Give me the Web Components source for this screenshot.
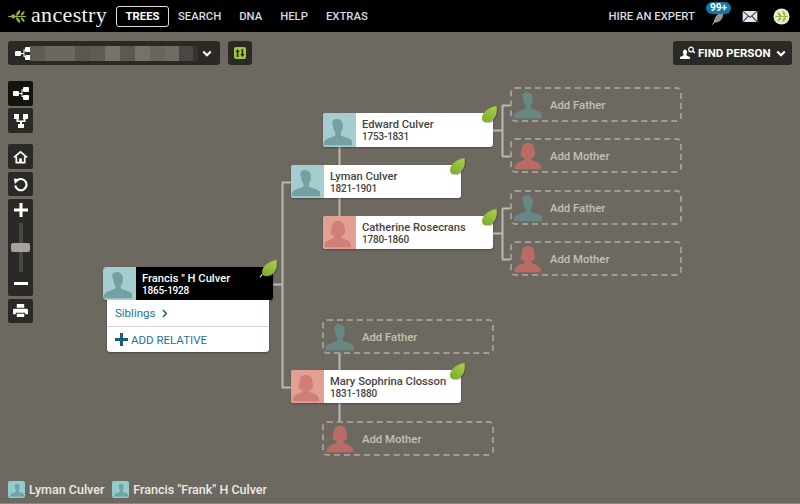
<!DOCTYPE html>
<html>
<head>
<meta charset="utf-8">
<title>Ancestry tree</title>
<style>
  html, body { margin: 0; height: 100%; }
  body { background: #6d6860; font-family: Roboto, "Liberation Sans", sans-serif; overflow: hidden; }
</style>
</head>
<body>
<tree-app></tree-app>

<script>
const MALE = 'M12 3.500c3.400 0 5.200 2.600 5.200 6 0 1.600-.3 2.700-.8 3.900-.4 1-.9 1.800-1.100 2.700-.2 1 .3 1.700 1.500 2.200l5.400 1.900c2 .7 3.200 2 3.800 4.300v1.500H.5v-1.500c.6-2.300 1.800-3.600 3.800-4.300l5-1.900c1.200-.5 1.700-1.200 1.500-2.200-.2-.9-.8-1.700-1.200-2.700-.5-1.200-.8-2.300-.8-3.900C6.800 6.100 8.600 3.500 12 3.500z';
const FEMALE = 'M12.500 3.500c3.300 0 6 1.700 6 5 0 2 .6 3 .6 4.600 0 1.600-1.300 2.700-3 3-.5.900-.3 1.800.8 2.400l3.700 1.500c2.200.9 3.300 2.200 3.600 4.300v1.700H1.500v-1.700c.3-2.100 1.400-3.400 3.600-4.300l3.700-1.500c1.100-.6 1.300-1.500.8-2.400-1.800-.3-3.100-1.300-3.100-2.800 0-1.400.9-2.300 1-4.300.2-3.500 2-5.500 5-5.500z';

function silhouette(kind, color, size) {
  const d = kind === 'f' ? FEMALE : MALE;
  return `<svg viewBox="0 0 25 28" width="${size}" height="${size * 28 / 25}" style="display:block;flex:none"><path fill="${color}" d="${d}"/></svg>`;
}

const LEAF = `<svg viewBox="0 0 20 20" width="19" height="19" style="display:block">
  <defs><linearGradient id="lg" x1="0.800" y1="0" x2="0.200" y2="1"><stop offset="0" stop-color="#a5cf48"/><stop offset="1" stop-color="#7fab2e"/></linearGradient></defs>
  <path d="M18.500 1C20 10 16 18 8 18c-2 0-3.500-.5-4.500-2C1.500 10 8 2.500 18.500 1z" fill="#2f2d28" opacity=".4" transform="translate(1 .8)"/>
  <path d="M18.500 1C20 10 16 18 8 18c-2 0-3.500-.5-4.500-2C1.500 10 8 2.500 18.500 1z" fill="url(#lg)"/>
  <path d="M.8 19.200 3.500 16.200" stroke="#e4ebd2" stroke-width="1.100" fill="none"/>
</svg>`;

const TREE_ICON = `<svg viewBox="0 0 16 13" width="16" height="13" style="display:block;flex:none" fill="#fff">
  <rect x="0" y="4" width="6" height="5" rx="1"/><rect x="10" y="0" width="6" height="5" rx="1"/><rect x="10" y="8" width="6" height="5" rx="1"/>
  <path d="M5 6h3.500V2.500H11v1H9.500v5.500H11v1H8.500V7H5z"/>
</svg>`;

const CHEVRON = `<svg viewBox="0 0 12 8" width="10" height="7" style="display:block;flex:none"><path d="M1.500 1.500 6 6l4.500-4.500" fill="none" stroke="#fff" stroke-width="2.600"/></svg>`;

class NavBar extends HTMLElement {
  connectedCallback() {
    this.attachShadow({ mode: 'open' }).innerHTML = `
      <style>
        :host { display: flex; align-items: center; height: 32px; background: #000; padding: 0 0 0 8px; box-sizing: border-box; }
        .logo { display: flex; align-items: center; width: 108px; flex: none; }
        .logo span { font: 22px/24px "Liberation Serif", serif; color: #f2f2ee; margin-left: 2px; letter-spacing: .35px; position: relative; top: -1px; }
        a { font-size: 11.300px; font-weight: 500; color: #d5dbe0; white-space: nowrap; }
        .links { display: flex; align-items: center; gap: 18px; }
        .links a.on { color: #fff; font-weight: 700; border: 1px solid #dcdcdc; border-radius: 3px; height: 21px; line-height: 20px; width: 53px; box-sizing: border-box; text-align: center; margin-right: -9px; }
        .right { margin-left: auto; display: flex; align-items: center; padding-right: 10px; }
        .note { position: relative; width: 12px; height: 20px; margin-left: 17px; }
        .badge { position: absolute; left: -6px; top: -4px; width: 25px; height: 12px; background: #0e7aa6; border-radius: 8px; color: #fff; font-size: 10px; font-weight: 700; line-height: 12px; text-align: center; }
        .mail { margin-left: 18px; flex: none; }
        .me { margin-left: 15px; flex: none; }
      </style>
      <div class="logo">
        <svg viewBox="0 0 22 16" width="21" height="15" style="flex:none"><g fill="#8db63c"><path d="M0 7.400h19v1.200H0z"/><path d="M3 7.400C4 5.800 6 5.500 8 6.400 6.500 7.800 4.500 8 3 7.400zM3 8.600C4 10.200 6 10.500 8 9.600 6.500 8.200 4.500 8 3 8.600z"/><path d="M8.500 7.500C8.200 4.500 9.700 2.300 12.500.8c.8 3-.6 5.400-4 6.700zM8.500 8.500c-.3 3 1.200 5.200 4 6.700.8-3-.6-5.400-4-6.700z"/><path d="M13.500 7.300c-.2-2.400 1.200-4.300 3.800-5.300.4 2.500-1 4.400-3.800 5.300zM13.500 8.700c-.2 2.400 1.200 4.300 3.800 5.300.4-2.500-1-4.400-3.800-5.300z"/></g></svg>
        <span>ancestry</span>
      </div>
      <div class="links">
        <a class="on">TREES</a><a>SEARCH</a><a>DNA</a><a>HELP</a><a>EXTRAS</a>
      </div>
      <div class="right">
        <a>HIRE AN EXPERT</a>
        <div class="note">
          <svg viewBox="0 0 12 20" width="12" height="20" style="display:block"><path d="M2 16C2.500 10 5.500 7.500 11.500 6c0 6-3 10.500-8 10.500z" fill="#8d9196"/><path d="M.5 18.500 4 14" stroke="#d0d4d8" stroke-width="1"/></svg>
          <div class="badge">99+</div>
        </div>
        <svg class="mail" viewBox="0 0 16 12" width="16" height="11"><rect width="16" height="12" fill="#dfe5ea"/><path d="M.5.500 8 7l7.500-6.500M.5 11.500 6 5.500M15.500 11.500 10 5.500" fill="none" stroke="#2a3d50" stroke-width="1.100"/></svg>
        <svg class="me" viewBox="0 0 18 18" width="17" height="17"><circle cx="9" cy="9" r="8.500" fill="#e6ecd0"/><g fill="#8db63c"><path d="M2.500 8.500h13v1h-13z"/><path d="M5 4.500c2 .3 3.500 2 4 4.500-2.500-.3-4-2-4-4.500zM5 14c2-.3 3.500-2 4-4.500-2.500.3-4 2-4 4.500zM10 3c2.200.8 3.300 2.800 3.300 5.700C11 8 10 6 10 3zM10 15c2.200-.8 3.300-2.800 3.300-5.700C11 10 10 12 10 15z"/></g></svg>
      </div>`;
  }
}

class SubBar extends HTMLElement {
  connectedCallback() {
    const blocks = [['#5f5b55',15],['#6b6761',30],['#5a5650',15],['#5f5b55',15],['#76726c',15],['#5c5852',15],['#75716b',15],['#69655f',15],['#6f6b65',14],['#4a4742',14],['#35332f',5]];
    this.attachShadow({ mode: 'open' }).innerHTML = `
      <style>
        :host { display: flex; align-items: center; padding: 9px 8px 0; gap: 8px; height: 24px; }
        .box { background: #2b2925; border-radius: 3px; height: 24px; display: flex; align-items: center; box-sizing: border-box; }
        .tree { width: 212px; padding-left: 7px; }
        .name { display: flex; height: 15px; flex: none; margin-left: -1px; }
        .name i { display: block; height: 15px; }
        .chev { margin-left: 4px; }
        .sync { width: 24px; justify-content: center; }
        .sync span { width: 12px; height: 12px; background: #9cc93c; border-radius: 2px; display: block; }
        .find { margin-left: auto; width: 119px; padding-left: 7px; color: #fff; font-size: 11.500px; font-weight: 700; white-space: nowrap; }
        .find span { margin: 0 5px 0 2px; }
      </style>
      <div class="box tree">
        ${TREE_ICON}
        <div class="name">${blocks.map(b => `<i style="background:${b[0]};width:${b[1]}px"></i>`).join('')}</div>
        <div class="chev">${CHEVRON}</div>
      </div>
      <div class="box sync"><span><svg viewBox="0 0 12 12" width="12" height="12" style="display:block"><path d="M3.600 2 1.500 5h1.300v5h1.600V5h1.300zM8.400 10l2.100-3H9.200V2H7.600v5H6.300z" fill="#23241c"/></svg></span></div>
      <div class="box find">
        <svg viewBox="0 0 16 14" width="16" height="14" style="flex:none"><path d="M0 13v-2l3.500-1.500V8C2.600 7 2.500 4 5 3.500 7.500 4 7.400 7 6.500 8v1.500L10 11v2z" fill="#fff"/><circle cx="11" cy="3.500" r="2.300" fill="none" stroke="#fff" stroke-width="1.200"/><path d="m12.800 5 2 2" stroke="#fff" stroke-width="1.300"/></svg>
        <span>FIND PERSON</span>${CHEVRON}
      </div>`;
  }
}

class ToolBar extends HTMLElement {
  connectedCallback() {
    this.attachShadow({ mode: 'open' }).innerHTML = `
      <style>
        :host { display: flex; flex-direction: column; width: 25px; position: absolute; left: 8px; top: 81px; }
        .b { width: 25px; height: 24px; background: #2b2925; border-radius: 2px; display: flex; align-items: center; justify-content: center; margin-bottom: 3px; flex: none; }
        .b.tall { height: 25px; margin-bottom: 2px; }
        .b.home { height: 25px; }
        .b.dark { background: #14130f; }
        .gap { height: 9px; }
        .b.zoom { height: 97px; flex-direction: column; justify-content: flex-start; }
        .plus { margin-top: 4px; flex: none; }
        .track { width: 4px; height: 49px; margin-top: 6px; background: #4b4843; position: relative; flex: none; }
        .thumb { position: absolute; left: -8px; top: 20px; width: 19px; height: 9px; background: #a6a39d; border-radius: 2px; }
        .minus { margin-top: 10px; width: 14px; height: 3px; background: #fff; flex: none; }
      </style>
      <div class="b tall dark">${TREE_ICON}</div>
      <div class="b tall"><svg viewBox="0 0 14 16" width="14" height="16"><path fill="#fff" d="M0 1h5v5H4.500v1.500h5V6H9V1h5v5h-2.500v3H8v2h2v4H4v-4h2V9H2.500V6H0z"/></svg></div>
      <div class="gap"></div>
      <div class="b home"><svg viewBox="0 0 16 14" width="15" height="14"><path fill="none" stroke="#fff" stroke-width="1.800" d="M1 7.500 8 1.500l7 6M3.500 6.500v6.500h9V6.500"/><rect x="6.500" y="8.500" width="3" height="4.500" fill="#fff"/></svg></div>
      <div class="b"><svg viewBox="0 0 16 16" width="15" height="15"><path fill="none" stroke="#fff" stroke-width="2.300" d="M4 4a6 6 0 1 1-1.600 5"/><path fill="#fff" d="M1 1.500 7 2.500 2 7.500z"/></svg></div>
      <div class="b zoom">
        <svg class="plus" viewBox="0 0 14 14" width="14" height="14"><path fill="#fff" d="M5.500 0h3v5.500H14v3H8.500V14h-3V8.500H0v-3h5.500z"/></svg>
        <div class="track"><div class="thumb"></div></div>
        <div class="minus"></div>
      </div>
      <div class="b"><svg viewBox="0 0 16 15" width="15" height="14"><path fill="#fff" d="M4 0h8v4H4zM1.500 5h13A1.500 1.500 0 0 1 16 6.500V11h-3V9.500H3V11H0V6.500A1.500 1.500 0 0 1 1.500 5zM4 10.500h8V14H4z"/></svg></div>`;
  }
}

// person card, placed on the tree canvas by x / y attributes
class PersonNode extends HTMLElement {
  connectedCallback() {
    const kind = this.getAttribute('kind') || 'm';
    const h = this.getAttribute('h') || 33;
    const active = this.hasAttribute('active');
    const bg = kind === 'f' ? '#e2a095' : '#a5cdcf';
    const fg = kind === 'f' ? '#cf7f75' : '#74a0a2';
    this.attachShadow({ mode: 'open' }).innerHTML = `
      <style>
        :host { position: absolute; left: ${this.getAttribute('x')}px; top: ${this.getAttribute('y')}px; width: 170px; }
        .card { display: flex; height: ${h}px; border-radius: 3px; overflow: hidden; background: ${active ? '#000' : '#fff'}; box-shadow: 0 1px 2px rgba(0,0,0,.3); }
        .pic { width: 33px; flex: none; background: ${bg}; display: flex; align-items: flex-end; justify-content: flex-start; overflow: hidden; }
        .text { padding: 6px 0 0 6px; color: ${active ? '#fff' : '#47443f'}; white-space: nowrap; }
        .n { font-size: 11.200px; line-height: 12px; font-weight: 500; }
        .d { font-size: 10px; line-height: 12px; font-weight: 500; letter-spacing: -.2px; }
        .leaf { position: absolute; right: -5px; top: -8px; }
        slot { display: block; }
      </style>
      <div class="card">
        <div class="pic">${silhouette(kind, fg, 29)}</div>
        <div class="text"><div class="n">${this.getAttribute('name')}</div><div class="d">${this.getAttribute('dates')}</div></div>
      </div>
      <div class="leaf">${LEAF}</div>
      <slot></slot>`;
  }
}

class PersonMenu extends HTMLElement {
  connectedCallback() {
    this.attachShadow({ mode: 'open' }).innerHTML = `
      <style>
        :host { display: block; margin: 0 4px; background: #fff; border-radius: 0 0 3px 3px; box-shadow: 0 1px 2px rgba(0,0,0,.35); color: #1f7399; font-size: 11.500px; }
        .row { height: 26px; display: flex; align-items: center; padding-left: 8px; box-sizing: border-box; }
        .row + .row { border-top: 1px solid #d8d6d0; }
        svg { display: block; flex: none; }
      </style>
      <div class="row"><span>Siblings</span><svg style="margin-left:7px" viewBox="0 0 7 10" width="6" height="9"><path d="M1.200 1 5 5 1.200 9" fill="none" stroke="#135f80" stroke-width="1.800"/></svg></div>
      <div class="row"><svg style="margin-right:3px" viewBox="0 0 13 13" width="13" height="13"><path fill="#135f80" d="M5 0h3v5h5v3H8v5H5V8H0V5h5z"/></svg><span>ADD RELATIVE</span></div>`;
  }
}

class AddParent extends HTMLElement {
  connectedCallback() {
    const kind = this.getAttribute('kind') || 'm';
    const fg = kind === 'f' ? '#b96c65' : '#688684';
    this.attachShadow({ mode: 'open' }).innerHTML = `
      <style>
        :host { position: absolute; left: ${this.getAttribute('x')}px; top: ${this.getAttribute('y')}px; width: 172px; height: 35px; box-sizing: border-box; border: 2px dashed #a09c93; border-radius: 5px; display: flex; align-items: flex-end; }
        .pic { width: 30px; flex: none; display: flex; justify-content: center; }
        span { color: #c4c0b7; font-size: 11.300px; font-weight: 500; align-self: center; margin: 2px 0 0 8px; white-space: nowrap; }
      </style>
      <div class="pic">${silhouette(kind, fg, 29)}</div>
      <span>${this.getAttribute('label')}</span>`;
  }
}

class TreeLines extends HTMLElement {
  connectedCallback() {
    const segs = [
      'M273 284.500h9.500', 'M282.500 182.500V387.500', 'M282 182.500h9', 'M282 387.500h9',
      'M339.500 147V216', 'M339.500 353V421',
      'M493 130.500h9.500', 'M502.500 105.500V156.500', 'M502 105.500h8', 'M502 156.500h8',
      'M493 233.500h9.500', 'M502.500 208.500V259.500', 'M502 208.500h8', 'M502 259.500h8'
    ];
    this.attachShadow({ mode: 'open' }).innerHTML = `
      <style>:host { position: absolute; left: 0; top: 0; } svg { display: block; }</style>
      <svg width="800" height="504"><path d="${segs.join(' ')}" fill="none" stroke="#bdb9b0" stroke-width="2"/></svg>`;
  }
}

class RecentBar extends HTMLElement {
  connectedCallback() {
    const chip = (t) => `<div class="chip"><div class="pic">${silhouette('m', '#6fa5a7', 14)}</div><span>${t}</span></div>`;
    this.attachShadow({ mode: 'open' }).innerHTML = `
      <style>
        :host { position: absolute; left: 8px; top: 480px; display: flex; gap: 8px; color: #ecebe6; font-size: 12.500px; font-weight: 500; white-space: nowrap; }
        .chip { display: flex; align-items: center; height: 18px; gap: 4px; }
        .pic { width: 17px; height: 17px; background: #93cbcc; border-radius: 2px; overflow: hidden; display: flex; justify-content: center; align-items: flex-end; }
      </style>
      ${chip('Lyman Culver')}${chip('Francis "Frank" H Culver')}`;
  }
}

class TreeApp extends HTMLElement {
  connectedCallback() {
    this.attachShadow({ mode: 'open' }).innerHTML = `
      <style>
        :host { display: block; width: 800px; height: 504px; position: relative; overflow: hidden; }
        .line { position: absolute; left: 0; bottom: 0; width: 800px; height: 1px; background: #8c8880; }
      </style>
      <nav-bar></nav-bar>
      <sub-bar></sub-bar>
      <tree-lines></tree-lines>
      <tool-bar></tool-bar>
      <person-node x="103" y="267" name="Francis &quot; H Culver" dates="1865-1928" active><person-menu></person-menu></person-node>
      <person-node x="291" y="165" name="Lyman Culver" dates="1821-1901"></person-node>
      <person-node x="323" y="113" h="34" name="Edward Culver" dates="1753-1831"></person-node>
      <person-node x="323" y="216" kind="f" name="Catherine Rosecrans" dates="1780-1860"></person-node>
      <person-node x="291" y="370" kind="f" name="Mary Sophrina Closson" dates="1831-1880"></person-node>
      <add-parent x="510" y="87" label="Add Father"></add-parent>
      <add-parent x="510" y="138" kind="f" label="Add Mother"></add-parent>
      <add-parent x="510" y="190" label="Add Father"></add-parent>
      <add-parent x="510" y="241" kind="f" label="Add Mother"></add-parent>
      <add-parent x="322" y="319" label="Add Father"></add-parent>
      <add-parent x="322" y="421" kind="f" label="Add Mother"></add-parent>
      <recent-bar></recent-bar>
      <div class="line"></div>`;
  }
}

customElements.define('nav-bar', NavBar);
customElements.define('sub-bar', SubBar);
customElements.define('tool-bar', ToolBar);
customElements.define('person-node', PersonNode);
customElements.define('person-menu', PersonMenu);
customElements.define('add-parent', AddParent);
customElements.define('tree-lines', TreeLines);
customElements.define('recent-bar', RecentBar);
customElements.define('tree-app', TreeApp);
</script>
</body>
</html>
